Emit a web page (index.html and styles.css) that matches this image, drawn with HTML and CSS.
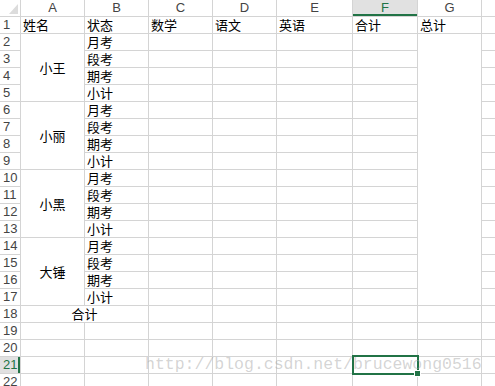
FILE: index.html
```html
<!DOCTYPE html>
<html lang="zh-CN">
<head>
    <meta charset="UTF-8">
    <title>成绩表</title>
    <link rel="stylesheet" href="styles.css">
</head>
<body>
<div class="page">
    <div class="sheet">
        <!-- 列标题 -->
        <div class="corner"><svg width="20" height="16" viewBox="0 0 20 16"><polygon points="9,14 18,14 18,4" fill="#dcdcdc"/></svg></div>
        <div class="hd">A</div><div class="hd">B</div><div class="hd">C</div><div class="hd">D</div><div class="hd">E</div><div class="hd sel-col">F</div><div class="hd">G</div><div class="hd"></div>

        <div class="rh">1</div><div>姓名</div><div>状态</div><div>数学</div><div>语文</div><div>英语</div><div>合计</div><div>总计</div><div></div>

        <!-- 小王 -->
        <div class="rh">2</div><div class="mg r4">小王</div><div>月考</div><div></div><div></div><div></div><div></div><div class="g16"></div><div></div>
        <div class="rh">3</div><div>段考</div><div></div><div></div><div></div><div></div><div></div>
        <div class="rh">4</div><div>期考</div><div></div><div></div><div></div><div></div><div></div>
        <div class="rh">5</div><div>小计</div><div></div><div></div><div></div><div></div><div></div>

        <!-- 小丽 -->
        <div class="rh">6</div><div class="mg r4">小丽</div><div>月考</div><div></div><div></div><div></div><div></div><div></div>
        <div class="rh">7</div><div>段考</div><div></div><div></div><div></div><div></div><div></div>
        <div class="rh">8</div><div>期考</div><div></div><div></div><div></div><div></div><div></div>
        <div class="rh">9</div><div>小计</div><div></div><div></div><div></div><div></div><div></div>

        <!-- 小黑 -->
        <div class="rh">10</div><div class="mg r4">小黑</div><div>月考</div><div></div><div></div><div></div><div></div><div></div>
        <div class="rh">11</div><div>段考</div><div></div><div></div><div></div><div></div><div></div>
        <div class="rh">12</div><div>期考</div><div></div><div></div><div></div><div></div><div></div>
        <div class="rh">13</div><div>小计</div><div></div><div></div><div></div><div></div><div></div>

        <!-- 大锤 -->
        <div class="rh">14</div><div class="mg r4">大锤</div><div>月考</div><div></div><div></div><div></div><div></div><div></div>
        <div class="rh">15</div><div>段考</div><div></div><div></div><div></div><div></div><div></div>
        <div class="rh">16</div><div>期考</div><div></div><div></div><div></div><div></div><div></div>
        <div class="rh">17</div><div>小计</div><div></div><div></div><div></div><div></div><div></div>

        <div class="rh">18</div><div class="mg c2">合计</div><div></div><div></div><div></div><div></div><div></div><div></div>
        <div class="rh">19</div><div></div><div></div><div></div><div></div><div></div><div></div><div></div><div></div>
        <div class="rh">20</div><div></div><div></div><div></div><div></div><div></div><div></div><div></div><div></div>
        <div class="rh sel-row">21</div><div></div><div></div><div></div><div></div><div></div><div class="active"><span class="handle"></span></div><div></div><div></div>
        <div class="rh">22</div><div></div><div></div><div></div><div></div><div></div><div></div><div></div><div></div>
    </div>
    <span class="wm">http://blog.csdn.net/brucewong0516</span>
</div>
</body>
</html>
```

FILE: styles.css
```css
body {
    margin: 0;
    background: #fff;
    overflow: hidden;
}
.page {
    position: relative;
    width: 495px;
    height: 386px;
    overflow: hidden;
}
.sheet {
    display: grid;
    grid-template-columns: 20px 63px 63px 63px 63px 75px 64px 63px 1fr;
    grid-template-rows: repeat(23, 16px);
    gap: 1px;
    background: #d4d4d4; /* gridlines */
    font-family: "Noto Sans CJK SC", sans-serif;
    font-size: 13px;
    color: #000;
}
.sheet > div {
    background: #fff;
    line-height: 16px;
    padding-left: 2px;
    white-space: nowrap;
}
.sheet > .corner {
    padding: 0;
}
.corner svg {
    display: block;
}
.sheet > .hd {
    padding: 0;
    text-align: center;
    font-family: "Liberation Sans", sans-serif;
    color: #444;
}
.sheet > .rh {
    padding-left: 3px;
    font-family: "Liberation Sans", sans-serif;
    color: #444;
}
.sheet > .sel-col {
    background: #e1e1e1;
    color: #217346;
    box-shadow: inset 0 -2px 0 #217346;
}
.sheet > .sel-row {
    background: #e1e1e1;
    color: #217346;
    box-shadow: inset -2px 0 0 #217346;
}
.sheet > .mg {
    display: flex;
    align-items: center;
    justify-content: center;
    padding: 0;
}
.r4 {
    grid-row: span 4;
}
.c2 {
    grid-column: span 2;
}
.g16 {
    grid-row: span 16;
}
.sheet > .active {
    position: relative;
    z-index: 1;
}
.active::after {
    content: "";
    position: absolute;
    top: -2px;
    left: -1px;
    right: -2px;
    bottom: -2px;
    border: 2px solid #217346;
}
.handle {
    position: absolute;
    right: -4px;
    bottom: -4px;
    width: 5px;
    height: 5px;
    background: #217346;
    border: 1px solid #fff;
    z-index: 2;
}
.wm {
    position: absolute;
    left: 145px;
    top: 355px;
    font-family: "Liberation Mono", monospace;
    font-size: 16.5px;
    line-height: 20px;
    color: rgba(160, 160, 160, 0.45);
    white-space: nowrap;
    z-index: 3;
}
```
